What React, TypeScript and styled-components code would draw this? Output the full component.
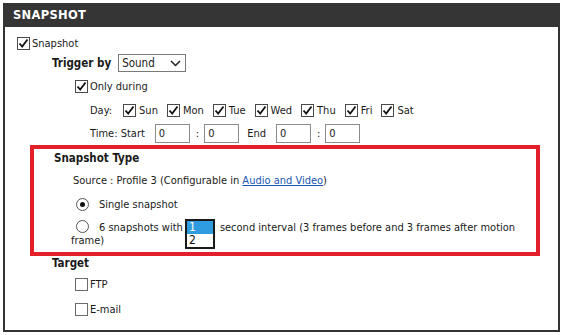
import React, { FC } from "react";
import styled, { createGlobalStyle } from "styled-components";

const Global = createGlobalStyle`
  body {
    margin: 0;
    background: #fff;
    font-family: "DejaVu Sans Condensed", "Liberation Sans", sans-serif;
    font-size: 11px;
    color: #1a1a1a;
  }
`;

const Panel = styled.section`
  margin: 3px 0 0 3px;
  width: 557px;
`;

const Header = styled.h2`
  margin: 0;
  height: 24px;
  background: #353535;
  color: #fff;
  font-family: "DejaVu Sans", sans-serif;
  font-weight: 700;
  font-size: 11.5px;
  letter-spacing: 0.3px;
  display: flex;
  align-items: center;
  padding-left: 10px;
`;

const Body = styled.div`
  border: 2px solid #333;
  border-top: none;
  padding: 7px 0 10px 0;
`;

const Row = styled.div<{ $indent: number; $h: number }>`
  display: flex;
  align-items: center;
  height: ${(p) => p.$h}px;
  padding-left: ${(p) => p.$indent}px;
  white-space: nowrap;
`;

const Bold = styled.span`
  font-weight: 700;
  font-size: 11.5px;
  margin-right: 7px;
`;

const Label = styled.span<{ $gap?: number }>`
  margin-left: ${(p) => p.$gap ?? 3}px;
`;

const Box = styled.span<{ $on?: boolean }>`
  display: inline-flex;
  align-items: center;
  justify-content: center;
  width: 13px;
  height: 13px;
  box-sizing: border-box;
  border: 1px solid ${(p) => (p.$on ? "#4a4a4a" : "#6b6b6b")};
  background: #fff;
  flex: none;
`;

const Check: FC<{ checked?: boolean }> = ({ checked }) => (
  <Box $on={checked}>
    {checked && (
      <svg width="11" height="11" viewBox="0 0 11 11">
        <path d="M1.5 5.5 L4.2 8.5 L9.5 1.5" fill="none" stroke="#111" strokeWidth="1.8" />
      </svg>
    )}
  </Box>
);

const DayItem = styled.span`
  display: inline-flex;
  align-items: center;
  margin-right: 9px;
`;

const Select = styled.span`
  display: inline-flex;
  align-items: center;
  justify-content: space-between;
  width: 68px;
  height: 18px;
  box-sizing: border-box;
  border: 1px solid #7a7a7a;
  padding: 0 4px 0 3px;
  font-size: 11.5px;
`;

const TextBox = styled.span`
  display: inline-flex;
  align-items: center;
  width: 35px;
  height: 19px;
  box-sizing: border-box;
  border: 1px solid #8c8c8c;
  padding-left: 3px;
`;

const Colon = styled.span`
  margin: 0 5px 0 6px;
`;

const Spacer = styled.span<{ $w: number }>`
  display: inline-block;
  width: ${(p) => p.$w}px;
`;

const Highlight = styled.div`
  margin: 1px 0 0 25px;
  width: 510px;
  box-sizing: border-box;
  border: 4px solid #e31f29;
  padding: 0 0 5px 0;
`;

const Radio = styled.span<{ $on?: boolean }>`
  display: inline-flex;
  align-items: center;
  justify-content: center;
  width: 13px;
  height: 13px;
  box-sizing: border-box;
  border-radius: 50%;
  border: 1px solid #555;
  flex: none;
  &::after {
    content: "";
    display: ${(p) => (p.$on ? "block" : "none")};
    width: 5px;
    height: 5px;
    border-radius: 50%;
    background: #111;
  }
`;

const Link = styled.a`
  color: #1b55b3;
  text-decoration: underline;
`;

const Para = styled.div`
  padding-left: 37px;
  padding-top: 5px;
  line-height: 13px;
`;

const RadioLead = styled.span`
  display: inline-flex;
  align-items: center;
  margin-left: 5px;
  margin-right: 10px;
  vertical-align: -2px;
`;

const Drop = styled.span`
  position: relative;
  display: inline-block;
  width: 30px;
  height: 13px;
  margin: 0 5px 0 2px;
  vertical-align: -2px;
`;

const DropList = styled.span`
  position: absolute;
  left: 0;
  top: -1px;
  width: 30px;
  box-sizing: border-box;
  border: 2px solid #1a1a1a;
  background: #fff;
  font-size: 12px;
`;

const Option = styled.span<{ $sel?: boolean }>`
  display: block;
  height: 13px;
  line-height: 13px;
  padding-left: 2px;
  background: ${(p) => (p.$sel ? "#2f9be0" : "#fff")};
  color: ${(p) => (p.$sel ? "#fff" : "#111")};
`;

const days = ["Sun", "Mon", "Tue", "Wed", "Thu", "Fri", "Sat"];

const App: FC = () => (
  <>
    <Global />
    <Panel>
      <Header>SNAPSHOT</Header>
      <Body>
        <Row $indent={12} $h={18}>
          <Check checked />
          <Label $gap={2}>Snapshot</Label>
        </Row>
        <Row $indent={47} $h={22}>
          <Bold>Trigger by</Bold>
          <Select>
            Sound
            <svg width="11" height="7" viewBox="0 0 11 7">
              <path d="M1 1 L5.5 5.5 L10 1" fill="none" stroke="#222" strokeWidth="1.5" />
            </svg>
          </Select>
        </Row>
        <Row $indent={70} $h={24}>
          <Check checked />
          <Label $gap={2}>Only during</Label>
        </Row>
        <Row $indent={85} $h={24}>
          <Label $gap={0}>Day:</Label>
          <Spacer $w={11} />
          {days.map((d) => (
            <DayItem key={d}>
              <Check checked />
              <Label>{d}</Label>
            </DayItem>
          ))}
        </Row>
        <Row $indent={85} $h={22}>
          <Label $gap={0}>Time: Start</Label>
          <Spacer $w={10} />
          <TextBox>0</TextBox>
          <Colon>:</Colon>
          <TextBox>0</TextBox>
          <Spacer $w={8} />
          <span>End</span>
          <Spacer $w={10} />
          <TextBox>0</TextBox>
          <Colon>:</Colon>
          <TextBox>0</TextBox>
        </Row>
        <Highlight>
          <Row $indent={20} $h={18}>
            <Bold>Snapshot Type</Bold>
          </Row>
          <Row $indent={39} $h={26}>
            Source : Profile 3 (Configurable in&nbsp;<Link href="#">Audio and Video</Link>)
          </Row>
          <Row $indent={42} $h={22}>
            <Radio $on />
            <Label $gap={10}>Single snapshot</Label>
          </Row>
          <Para>
            <RadioLead>
              <Radio />
            </RadioLead>
            6 snapshots with
            <Drop>
              <DropList>
                <Option $sel>1</Option>
                <Option>2</Option>
              </DropList>
            </Drop>
            second interval (3 frames before and 3 frames after motion frame)
          </Para>
        </Highlight>
        <Row $indent={47} $h={14}>
          <Bold>Target</Bold>
        </Row>
        <Row $indent={70} $h={28}>
          <Check />
          <Label $gap={2}>FTP</Label>
        </Row>
        <Row $indent={70} $h={22}>
          <Check />
          <Label $gap={2}>E-mail</Label>
        </Row>
      </Body>
    </Panel>
  </>
);

export default App;
